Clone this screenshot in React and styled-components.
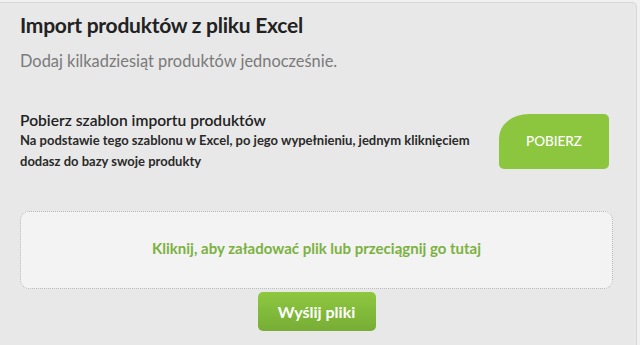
import React from "react";
import styled, { createGlobalStyle } from "styled-components";

const Global = createGlobalStyle`
  html, body { margin: 0; padding: 0; background: #f1f1f1; }
  body { font-family: Lato, "Open Sans", sans-serif; }
  * { box-sizing: border-box; }
`;

const Panel = styled.div`
  margin-top: 2px;
  width: 637px;
  height: 343px;
  background: #e8e8e8;
  border-top: 1px solid #d6d6d6;
  border-right: 1px solid #d6d6d6;
  border-top-right-radius: 5px;
  padding: 9px 23px 0 20px;
  display: flex;
  flex-direction: column;
`;

const Title = styled.h1`
  margin: 0;
  font-size: 21px;
  line-height: 26px;
  font-weight: 700;
  letter-spacing: -0.25px;
  color: #222;
`;

const Subtitle = styled.p`
  margin: 13px 0 0;
  font-size: 16.4px;
  line-height: 20px;
  color: #7a7a7a;
`;

const Section = styled.div`
  margin-top: 39px;
  display: flex;
  align-items: center;
  justify-content: space-between;
`;

const SectionText = styled.div`
  display: flex;
  flex-direction: column;
`;

const SectionTitle = styled.h2`
  margin: 0;
  font-size: 15.6px;
  line-height: 20px;
  font-weight: 600;
  color: #222;
`;

const SectionBody = styled.p`
  margin: 0;
  font-size: 13px;
  line-height: 21px;
  font-weight: 700;
  color: #2a2a2a;
  width: 470px;
`;

const DownloadButton = styled.button`
  width: 110px;
  height: 55px;
  margin-right: 4px;
  border: none;
  background: #8cc63f;
  color: #fff;
  font-family: Lato, sans-serif;
  font-size: 13.5px;
  font-weight: 500;
  text-transform: uppercase;
  border-radius: 30px 5px 5px 5px / 24px 5px 5px 5px;
  cursor: pointer;
`;

const DropZone = styled.div`
  margin-top: 39px;
  height: 78px;
  background: #f3f3f3;
  border: 1px dotted #b5b5b5;
  border-radius: 9px;
  display: flex;
  align-items: center;
  justify-content: center;
  padding-bottom: 4px;
  color: #7bb140;
  font-size: 15px;
  font-weight: 700;
`;

const SendButton = styled.button`
  align-self: center;
  margin-top: 3px;
  width: 118px;
  height: 39px;
  border: none;
  border-radius: 5px;
  background: linear-gradient(#8dc83f, #77ad36);
  color: #fff;
  font-family: Lato, sans-serif;
  font-size: 16px;
  font-weight: 700;
  cursor: pointer;
`;

export default function App() {
  return (
    <>
      <Global />
      <Panel>
        <Title>Import produktów z pliku Excel</Title>
        <Subtitle>Dodaj kilkadziesiąt produktów jednocześnie.</Subtitle>
        <Section>
          <SectionText>
            <SectionTitle>Pobierz szablon importu produktów</SectionTitle>
            <SectionBody>
              Na podstawie tego szablonu w Excel, po jego wypełnieniu, jednym kliknięciem dodasz do bazy swoje produkty
            </SectionBody>
          </SectionText>
          <DownloadButton>Pobierz</DownloadButton>
        </Section>
        <DropZone>Kliknij, aby załadować plik lub przeciągnij go tutaj</DropZone>
        <SendButton>Wyślij pliki</SendButton>
      </Panel>
    </>
  );
}
